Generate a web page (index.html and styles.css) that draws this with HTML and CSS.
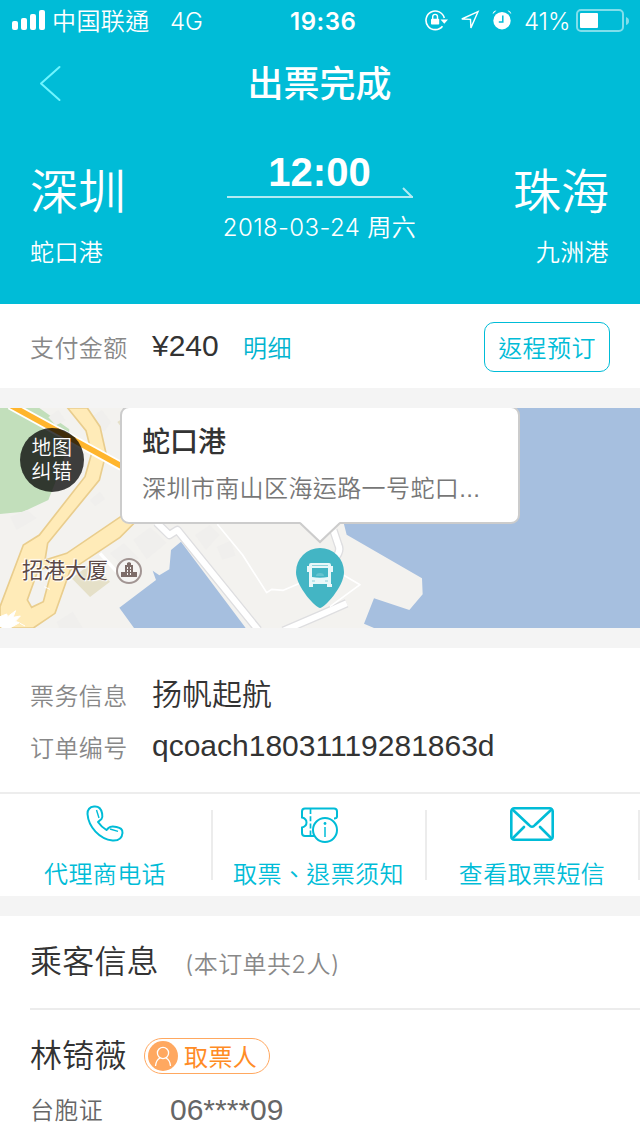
FILE: index.html
```html
<!DOCTYPE html>
<html lang="zh-TW">
<head>
<meta charset="utf-8">
<title>出票完成</title>
<link rel="stylesheet" href="styles.css">
</head>
<body>
<header class="hero">
  <div class="status">
    <svg class="signal" width="34" height="20" fill="#fff"><rect y="11" width="6" height="9" rx="2"/><rect x="9" y="8" width="6" height="12" rx="2"/><rect x="18" y="4" width="6" height="16" rx="2"/><rect x="27" width="6" height="20" rx="2"/></svg>
    <span class="carrier">中国联通</span>
    <span class="network">4G</span>
    <span class="clock">19:36</span>
    <svg class="lock" width="24" height="22" fill="none" stroke="#fff" stroke-width="1.6"><path d="M17.500 17.200A9.300 9.300 0 1 1 19.300 9"/><path d="M15.500 10.500h7.500l-3.700 4.300z" fill="#fff" stroke="none"/><rect x="6" y="9.800" width="8.200" height="5.800" rx=".8" fill="#fff" stroke="none"/><path d="M7.700 10V7.800a2.400 2.400 0 0 1 4.800 0V10" stroke-width="1.400"/></svg>
    <svg class="locate" width="20" height="20" fill="none" stroke="#fff" stroke-width="1.400"><path d="M18 1.700 1.800 9l8.700.4.4 8.500z"/></svg>
    <svg class="alarm" width="20" height="20" fill="#fff"><circle cx="10" cy="10.700" r="8.700"/><path d="M.6 4.200Q1.200.7 4.500.6zM19.400 4.200Q18.800.7 15.500.6z"/><path d="M10.800 5.500v6.500H6.800" fill="none" stroke="#00bcd7" stroke-width="1.500"/></svg>
    <span class="percent">41%</span>
    <svg class="battery" width="54" height="24"><rect x="1" y="1" width="46" height="21" rx="4" fill="none" stroke="#80deeb" stroke-width="2"/><path d="M50 8q3 1 3 4t-3 4z" fill="#80deeb"/><rect x="4" y="4" width="18" height="15" rx="1" fill="#fff"/></svg>
  </div>
  <div class="nav">
    <svg class="back" width="24" height="38" fill="none" stroke="#6ff5ff" stroke-width="2" stroke-linecap="round" stroke-linejoin="round"><path d="M20.500 2 2 18.500l18.500 16.500"/></svg>
    <h1 class="title">出票完成</h1>
  </div>
  <div class="trip">
    <div class="place"><div class="city">深圳</div><div class="port">蛇口港</div></div>
    <div class="when">
      <div class="time">12:00</div>
      <svg class="arrow" width="188" height="14" fill="none" stroke="#b3ebf3" stroke-width="2"><path d="M1 10h186M177 1l9 9"/></svg>
      <div class="date">2018-03-24 周六</div>
    </div>
    <div class="place place-end"><div class="city">珠海</div><div class="port">九洲港</div></div>
  </div>
</header>

<section class="pay">
  <span class="label">支付金额</span>
  <span class="amount">¥240</span>
  <a class="detail">明细</a>
  <a class="return-button">返程预订</a>
</section>

<section class="map">
  <svg class="map-art" width="640" height="220" viewBox="0 24 1920 660">
    <rect y="24" width="1920" height="660" fill="#f3f2ef"/>
    <path d="M0 24H118L208 88 200 150 165 250 145 300 70 335 0 342z" fill="#c2dfbb"/>
    <g fill="#f0efed"><path d="M145 52l30-22 22 32-30 14zM270 55l35-25 28 35-20 30zM400 420l50-38 50 46-60 50zM330 460l42-30 45 45-48 25zM585 405l45-30 28 30-40 45zM650 440l42-18 15 45-40 12zM170 665l48-30 30 49h-70zM30 350l50-20 30 25-60 35zM270 300l30-25 15 22-30 22z"/></g>
    <path d="M352 66l10-7v20zM215 535l60-45 55 55-60 46z" fill="#e5e0c8"/>
    <path d="M300 460l50 55" stroke="#fff" stroke-width="10"/>
    <path fill-rule="evenodd" d="M203 24 258 92 275 160 255 230 118 405 70 435 0 620V684H100L165 640 210 512 360 412 402 370 362 350 200 460 135 480 143 430 298 240 318 160 300 80 262 24zM115 508 158 500 130 605 95 622 82 600z" fill="#ffebb8" stroke="#e9cd8d" stroke-width="5"/>
    <path d="M30 15 365 199" stroke="#fff" stroke-width="28"/><path d="M30 15 365 199" stroke="#ffb52d" stroke-width="17"/>
    <path d="M0 650l20-8 3 8 24-18-8 20 22-4-15 16 12 4-28 16H10l-10-5zM132 560l18 8M60 670l15 8" fill="#fff" stroke="#fff" stroke-width="3"/>
    <path d="M543 425 737 684H402L358 623 468 540 458 512 478 526 508 508 513 450zM1032 24V373L1040 404 1266 535 1268 583 1228 630 1122 595 1092 671 1122 684H1920V24z" fill="#a6bfdf"/>
    <g fill="none" stroke-linejoin="round"><path d="M470 368 508 405 532 390 775 690M850 692 960 645 1040 610M1000 480Q1025 455 1015 435L1000 390" stroke="#dedee0" stroke-width="26"/><path d="M470 368 508 405 532 390 775 690M850 692 960 645 1040 610M1000 480Q1025 455 1015 435L1000 390" stroke="#fff" stroke-width="18"/><path d="M652 373 728 465 800 578 815 568 850 571 910 545M1030 525 1080 554 990 620" stroke="#fff" stroke-width="5"/></g>
  </svg>
  <div class="poi"><span class="poi-name">招港大厦</span>
    <svg class="poi-icon" width="28" height="28"><circle cx="14" cy="14" r="12" fill="#f5f4f3" stroke="#a29593" stroke-width="2"/><path d="M6 20v-5h4V8h2V6l2-1 2 1v2h2v7h4v5z" fill="#7d6c69"/><path d="M12.500 10v8M15.500 10v8" stroke="#f5f4f3" stroke-dasharray="2 1"/></svg>
  </div>
  <div class="fix-badge">地图<br>纠错</div>
  <svg class="pin" width="48" height="61"><path d="M24 60C20 60 0 39 0 24a24 24 0 0 1 48 0C48 39 28 60 24 60z" fill="#43b5c4"/><path d="M12 18v6M36 18v6" fill="none" stroke="#e9f7f9" stroke-width="2"/><path d="M15 15h18q2 0 2 2v19h1v3h-5v-3H17v3h-4V17q0-2 2-2z" fill="#e9f7f9"/><path d="M16 20h16v9q-8 1.500-16 0z" fill="#43b5c4"/><path d="M16 17.500h16M16 33h3M29 33h3" stroke="#8fd2db"/><path d="M20 28q0-3 4-3t4 3z" fill="#65c3cf"/></svg>
  <div class="callout">
    <div class="callout-title">蛇口港</div>
    <div class="callout-address">深圳市南山区海运路一号蛇口...</div>
    <svg class="tail" width="44" height="22"><path d="M2 0 22 19 42 0z" fill="#fff"/><path d="M2 1 22 20 42 1" fill="none" stroke="#ccc" stroke-width="2"/></svg>
  </div>
</section>

<section class="order">
  <div class="order-row"><span class="label">票务信息</span><span class="vendor">扬帆起航</span></div>
  <div class="order-row"><span class="label">订单编号</span><span class="number">qcoach18031119281863d</span></div>
</section>

<nav class="actions">
  <a class="action"><svg class="icon" width="44" height="40" fill="none" stroke="#00bcd7" stroke-width="2" stroke-linejoin="round"><path transform="translate(1.500 1.500)" d="M9.500 1C4 1.500 3 4.500 3 8.500 4 21.500 15 33.500 28 35c7 .5 9.500-2.500 10-7.500.2-4-2-5-6-6-4-1-6-1-8 1l-2 2C18 22 15.500 19.500 13.500 16.500l3.500-3c1.500-1.500 1-3 .5-6-.8-4-3.500-7-8-6.500z"/><path d="M13.500 6l2.500 8M27 25l8 2.300" stroke-width="1.400"/></svg><span class="action-name">代理商电话</span></a>
  <a class="action"><svg class="icon" width="44" height="40" fill="none" stroke="#00bcd7" stroke-width="2"><path d="M17 32H8q-3 0-3-3v-5.500c6-1.500 6-8.500 0-10V7.500Q5 4.500 8 4.500h29q3 0 3 3v5q0 2-3 2"/><path d="M13.500 5v26" stroke-width="1.700" stroke-dasharray="5 2.200"/><circle cx="28" cy="26" r="12"/><path d="M28 23v10" stroke-width="1.500"/><circle cx="28" cy="19.500" r="1.400" fill="#00bcd7" stroke="none"/></svg><span class="action-name">取票、退票须知</span></a>
  <a class="action"><svg class="icon" width="44" height="40" fill="none" stroke="#00bcd7" stroke-width="2.600" stroke-linecap="round" stroke-linejoin="round"><rect x="1.300" y="4.300" width="41.400" height="31.400" rx="3"/><path d="M3 6 19 21q3 3.500 6 0L41 6M3 34l11-11M41 34 30 23"/></svg><span class="action-name">查看取票短信</span></a>
</nav>

<section class="people">
  <div class="people-head"><h2 class="people-title">乘客信息</h2><span class="people-count">(本订单共2人)</span></div>
  <div class="person">
    <div class="person-head"><span class="person-name">林锜薇</span>
      <span class="tag"><svg class="tag-icon" width="30" height="30"><circle cx="15" cy="15" r="15" fill="#ffa860"/><g fill="none" stroke="#fff" stroke-width="1.300"><circle cx="15" cy="12" r="5.600"/><path d="M7.500 25q.5-6 4.500-8M22.500 25q-.5-6-4.500-8"/></g></svg><span class="tag-name">取票人</span></span>
    </div>
    <div class="person-doc"><span class="doc-type">台胞证</span><span class="doc-number">06****09</span></div>
  </div>
</section>
</body>
</html>
```
FILE: styles.css
```css
* { box-sizing: border-box; }
body {
  margin: 0;
  width: 640px;
  height: 1136px;
  overflow: hidden;
  background: #f4f4f4;
  color: #333;
  font-family: "Liberation Sans", "Noto Sans CJK TC", sans-serif;
  font-size: 24px;
  font-weight: 350;
  letter-spacing: .4px;
  white-space: nowrap;
}
svg { display: block; flex: none; }
h1, h2 { margin: 0; }

.hero { height: 304px; background: #00bcd7; color: #fff; }
.status { display: flex; align-items: center; height: 40px; padding-left: 12px; font-family: Inter, "Noto Sans CJK TC", sans-serif; line-height: 40px; }
.carrier { width: 110px; margin-left: 6px; padding-top: 3px; }
.network { width: 120px; margin-left: 8px; padding-top: 3px; letter-spacing: 0; }
.clock { width: 68px; padding-top: 3px; font-weight: 600; letter-spacing: .5px; }
.lock { margin-left: 67px; }
.locate { margin-left: 11px; }
.alarm { margin-left: 12px; }
.percent { width: 48px; margin-left: 12px; padding-top: 3px; letter-spacing: -.1px; }
.battery { margin-top: 1px; margin-left: 4px; }
.nav { display: grid; grid-template-columns: 88px 464px 88px; align-items: center; height: 88px; }
.back { margin: -2px 0 0 39px; }
.title { padding-right: 1px; padding-top: 1px; font-size: 36px; font-weight: 500; letter-spacing: 0; line-height: 88px; text-align: center; }
.trip { display: flex; justify-content: space-between; padding: 24px 31px 0 30px; }
.place { width: 160px; }
.place-end { text-align: right; }
.city { height: 81px; padding-top: 3px; font-size: 48px; line-height: 76px; letter-spacing: 0; }
.port { height: 40px; line-height: 40px; }
.when { display: flex; flex-direction: column; align-items: center; }
.time { height: 34px; font-size: 40px; line-height: 40px; font-weight: 700; letter-spacing: 0; }
.arrow { margin-top: 1px; margin-left: 2px; }
.date { height: 40px; margin-top: 7px; line-height: 40px; font-family: Inter, "Noto Sans CJK TC", sans-serif; }

.pay { display: flex; align-items: center; height: 84px; margin-bottom: 20px; padding: 0 30px; background: #fff; line-height: 84px; }
.label { width: 122px; color: #888; }
.pay .label, .detail { padding-top: 5px; }
.amount { width: 91px; font-size: 30px; letter-spacing: 0; }
.detail { color: #00b4cf; }
.return-button { width: 126px; height: 50px; margin: 2px 0 0 auto; padding-top: 2px; border: 1px solid #00bcd7; border-radius: 10px; color: #00bcd7; line-height: 48px; text-align: center; }

.map { position: relative; height: 220px; margin-bottom: 20px; overflow: hidden; }
.poi { position: absolute; left: 22px; top: 149px; display: flex; align-items: center; gap: 7px; color: #5d4a48; font-size: 21.500px; font-weight: 400; line-height: 28px; letter-spacing: 0; text-shadow: 0 0 3px #fff, 1px 1px 0 #fff, -1px -1px 0 #fff; }
.fix-badge { position: absolute; left: 20px; top: 20px; width: 64px; height: 64px; padding-top: 8px; border-radius: 50%; background: rgba(0,0,0,.75); color: #fff; font-size: 20px; line-height: 24px; text-align: center; }
.pin { position: absolute; left: 296px; top: 140px; }
.callout { position: absolute; left: 120px; top: -2px; width: 400px; height: 118px; padding: 13px 20px; border: 2px solid #ccc; border-radius: 9px; background: #fff; }
.callout-title { height: 45px; font-size: 28px; font-weight: 500; line-height: 44px; letter-spacing: 0; }
.callout-address { color: #777; line-height: 45px; }
.tail { position: absolute; left: 176px; top: 114px; }

.order { height: 146px; padding: 20px 30px; border-bottom: 2px solid #ededed; background: #fff; }
.order-row { display: flex; height: 52px; line-height: 52px; }
.order .label { padding-top: 3px; }
.vendor { padding-top: 1px; font-size: 30px; letter-spacing: 0; }
.number { font-size: 30px; letter-spacing: 0; }

.actions { display: grid; grid-template-columns: 213px 214px 213px; height: 102px; margin-bottom: 20px; background: #fff; }
.action { display: flex; flex-direction: column; align-items: center; padding: 10px 3px 0 0; color: #00bcd7; background: linear-gradient(#ececec, #ececec) right 16px / 2px 70px no-repeat; }
.action-name { height: 40px; margin-top: 11px; line-height: 40px; }

.people { height: 220px; padding-left: 30px; background: #fff; }
.people-head { display: flex; align-items: center; height: 94px; border-bottom: 2px solid #ececec; }
.people-title { width: 155px; padding-bottom: 7px; font-size: 32px; font-weight: 350; letter-spacing: .2px; }
.people-count { color: #888; letter-spacing: .4px; font-family: Inter, "Noto Sans CJK TC", sans-serif; }
.person-head { display: flex; align-items: center; height: 76px; padding-top: 16px; }
.person-name { width: 114px; padding-bottom: 6px; font-size: 32px; letter-spacing: .2px; }
.tag { display: flex; align-items: center; width: 126px; height: 36px; padding-left: 3px; gap: 6px; border: 1px solid #ffa860; border-radius: 18px; color: #ff8c26; font-weight: 400; line-height: 34px; }
.tag-name { padding-top: 3px; }
.person-doc { display: flex; height: 48px; color: #666; line-height: 48px; }
.doc-type { width: 140px; padding-top: 1px; }
.doc-number { font-size: 30px; letter-spacing: 0; }
```
